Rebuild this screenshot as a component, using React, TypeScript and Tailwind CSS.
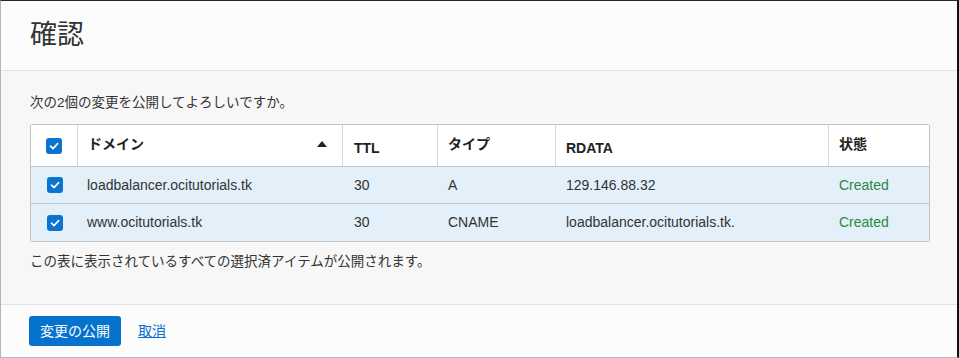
import React from "react";

const font = { fontFamily: '"Liberation Sans", "Noto Sans CJK JP", sans-serif' };

function Check() {
  return (
    <span className="flex h-4 w-4 items-center justify-center rounded-[3px] bg-[#0a74d0]">
      <svg width="12" height="12" viewBox="0 0 12 12" fill="none">
        <path d="M2.5 6.2 L5 8.6 L9.6 3.6" stroke="white" strokeWidth="1.6" strokeLinecap="round" strokeLinejoin="round" />
      </svg>
    </span>
  );
}

const rows = [
  { domain: "loadbalancer.ocitutorials.tk", ttl: "30", type: "A", rdata: "129.146.88.32", state: "Created" },
  { domain: "www.ocitutorials.tk", ttl: "30", type: "CNAME", rdata: "loadbalancer.ocitutorials.tk.", state: "Created" },
];

export default function App() {
  return (
    <div
      className="flex h-[358px] w-[959px] flex-col border-t border-l border-b border-t-[#1b2a35] border-l-[#b5b5b5] border-b-[#b5b5b5] border-r-2 border-r-[#111] text-[#333]"
      style={font}
    >
      <div className="flex h-[70px] items-center border-b border-[#e2e2e2] bg-[#fcfcfc] pl-[29px]">
        <h1 className="text-[27px] font-normal text-[#333]">確認</h1>
      </div>
      <div className="flex h-[233px] flex-col bg-[#f7f7f7] px-[29px] pt-[22px]">
        <p className="text-[13.5px] leading-5">次の2個の変更を公開してよろしいですか。</p>
        <div className="mt-[11px] w-[900px] rounded-[2px] border border-[#bcc4cc]">
          <div className="flex h-[42px] border-b border-[#bcc4cc] bg-white text-[14px] font-bold text-[#222]">
            <div className="flex w-[47px] items-center justify-center border-r border-[#d3d8dc]"><Check /></div>
            <div className="flex w-[265px] items-center justify-between border-r border-[#d3d8dc] pl-[10px] pr-[15px] pb-[3px]">
              <span>ドメイン</span>
              <svg width="10" height="6" viewBox="0 0 10 6"><path d="M0 6 L5 0 L10 6 Z" fill="#222" /></svg>
            </div>
            <div className="flex w-[95px] items-center border-r border-[#d3d8dc] pl-[11px] pt-[6px]">TTL</div>
            <div className="flex w-[118px] items-center border-r border-[#d3d8dc] pl-[10px] pb-[3px]">タイプ</div>
            <div className="flex w-[273px] items-center border-r border-[#d3d8dc] pl-[10px] pt-[6px]">RDATA</div>
            <div className="flex flex-1 items-center pl-[10px] pb-[3px]">状態</div>
          </div>
          {rows.map((r, i) => (
            <div key={i} className={`flex h-[37px] items-center bg-[#e3eff9] text-[14px] text-[#333] ${i === 0 ? "border-b border-[#bcc4cc]" : ""}`}>
              <div className="flex w-[47px] justify-center"><Check /></div>
              <div className="w-[265px] pl-[9px]">{r.domain}</div>
              <div className="w-[95px] pl-[11px]">{r.ttl}</div>
              <div className="w-[118px] pl-[10px]">{r.type}</div>
              <div className="w-[273px] pl-[10px]">{r.rdata}</div>
              <div className="flex-1 pl-[10px] text-[#2b8a3e]">{r.state}</div>
            </div>
          ))}
        </div>
        <p className="mt-[10px] text-[13.5px] leading-5">この表に表示されているすべての選択済アイテムが公開されます。</p>
      </div>
      <div className="flex flex-1 items-center gap-[17px] border-t border-[#e2e2e2] bg-[#fcfcfc] pl-[28px]">
        <button className="h-[30px] w-[92px] rounded-[3px] bg-[#0572ce] text-[14px] text-white">変更の公開</button>
        <a href="#" className="text-[14px] text-[#0572ce] underline">取消</a>
      </div>
    </div>
  );
}
